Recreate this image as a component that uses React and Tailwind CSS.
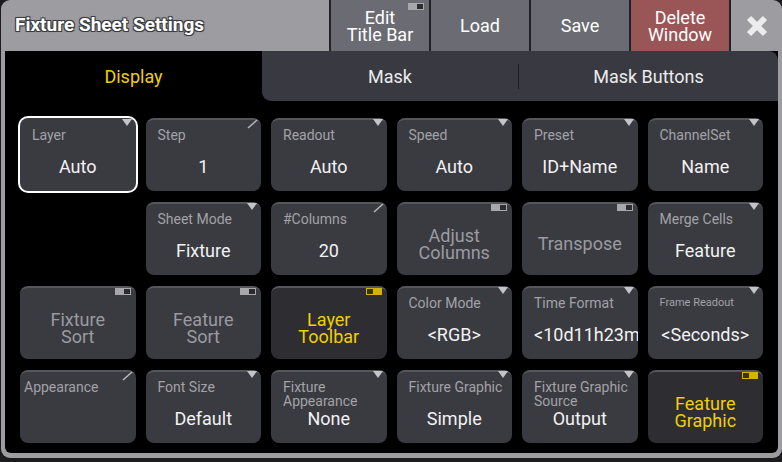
import React from "react";

function Drop() {
  return (
    <svg className="absolute top-[-1px] right-[4px]" width="10" height="7" viewBox="0 0 10 7">
      <path d="M0 0H10L5 7Z" fill="#c4c4c8" />
    </svg>
  );
}

function Edit() {
  return (
    <svg className="absolute top-[-1px] right-[3px]" width="11" height="10" viewBox="0 0 11 10">
      <path d="M1 9L10 1" stroke="#b8b8bc" strokeWidth="1.5" />
    </svg>
  );
}

function Toggle({ on, pos = "top-0 right-[5px]" }) {
  return (
    <div
      className={`absolute ${pos} w-[16px] h-[7px] flex p-[1px] ${
        on ? "bg-[#d4b400] justify-start" : "bg-[#a8a8ac] justify-end"
      }`}
    >
      <div className={`w-[6px] h-full ${on ? "bg-[#3b3300]" : "bg-[#2b2b30]"}`} />
    </div>
  );
}

function Cell({ label, value, ind, labelCls = "pl-[12px] text-[14px]", valueCls = "justify-center", selected, extra = "" }) {
  return (
    <div
      className={`relative rounded-[8px] bg-[#3a3a41] flex flex-col border-t-2 ${
        selected ? "border-[#3a3a41] ring-2 ring-white" : "border-[#56565d]"
      } ${extra}`}
    >
      {ind}
      <div className={`h-[28px] pt-[8px] leading-[14px] text-[#a2a2a7] whitespace-nowrap ${labelCls}`}>{label}</div>
      <div className={`h-[37px] flex items-center text-[18px] text-[#f2f2f2] whitespace-nowrap overflow-hidden ${valueCls}`}>
        {value}
      </div>
    </div>
  );
}

function Big({ lines, on, ind, extra = "" }) {
  return (
    <div
      className={`relative rounded-[8px] border-t-2 border-[#56565d] flex items-center justify-center text-center text-[18px] leading-[17px] pt-[8px] ${
        on ? "bg-[#2d2d32] text-[#f2cf00]" : "bg-[#3a3a41] text-[#9b9ba0]"
      } ${extra}`}
    >
      {ind}
      <div>
        {lines.map((l, i) => (
          <div key={i}>{l}</div>
        ))}
      </div>
    </div>
  );
}

function TitleBtn({ children, bg = "bg-[#6b6c73]", ind }) {
  return (
    <div
      className={`relative w-[100px] border-l-2 border-[#222226] ${bg} flex items-center justify-center text-center text-[18px] leading-[17px] text-white`}
    >
      {ind}
      <div>{children}</div>
    </div>
  );
}

export default function App() {
  return (
    <div className="w-[782px] h-[462px] bg-[#1c1c1e] font-['Roboto',sans-serif] overflow-hidden">
      <div className="ml-[1px] w-[781px] h-[458px] bg-[#9c9ca1] rounded-[9px] flex flex-col overflow-hidden">
        {/* title bar */}
        <div className="h-[51px] flex shrink-0">
          <div className="w-[328px] flex items-center pl-[14px] text-[19px] font-bold text-white [text-shadow:-1px_-1px_0_#3c3c40,1px_-1px_0_#3c3c40,-1px_1px_0_#3c3c40,1px_1px_0_#3c3c40,0_0_2px_#333]">
            Fixture Sheet Settings
          </div>
          <TitleBtn ind={<Toggle pos="top-[3px] right-[5px]" />}>
            Edit
            <br />
            Title Bar
          </TitleBtn>
          <TitleBtn>Load</TitleBtn>
          <TitleBtn>Save</TitleBtn>
          <TitleBtn bg="bg-[#9a5556]">
            Delete
            <br />
            Window
          </TitleBtn>
          <div className="flex-1 border-l-2 border-[#222226] flex items-center justify-center">
            <svg width="24" height="22" viewBox="0 0 24 22">
              <path d="M4 3L20 19M20 3L4 19" stroke="#ececec" strokeWidth="6" />
            </svg>
          </div>
        </div>

        {/* content */}
        <div className="flex-1 mx-[4px] mb-[5px] bg-black rounded-b-[6px] flex flex-col">
          <div className="h-[50px] flex shrink-0 text-[18px]">
            <div className="w-[257px] flex items-center justify-center text-[#f2cf00]">Display</div>
            <div className="flex-1 flex items-center bg-[#393941] rounded-bl-[9px] rounded-tr-[9px] text-[#ececec]">
              <div className="w-[256px] flex justify-center">Mask</div>
              <div className="w-px h-[25px] bg-[#1c1c20]" />
              <div className="flex-1 flex justify-center">Mask Buttons</div>
            </div>
          </div>

          <div className="grid grid-cols-6 grid-rows-[repeat(4,73px)] gap-x-[10px] gap-y-[11px] px-[15px] pt-[17px]">
            {/* row 1 */}
            <Cell label="Layer" value="Auto" ind={<Drop />} selected />
            <Cell label="Step" value="1" ind={<Edit />} />
            <Cell label="Readout" value="Auto" ind={<Drop />} />
            <Cell label="Speed" value="Auto" ind={<Drop />} />
            <Cell label="Preset" value="ID+Name" ind={<Drop />} />
            <Cell label="ChannelSet" value="Name" ind={<Drop />} />

            {/* row 2 */}
            <Cell label="Sheet Mode" value="Fixture" ind={<Drop />} extra="col-start-2" />
            <Cell label="#Columns" value="20" ind={<Edit />} />
            <Big lines={["Adjust", "Columns"]} ind={<Toggle />} />
            <Big lines={["Transpose"]} ind={<Toggle />} />
            <Cell label="Merge Cells" value="Feature" ind={<Drop />} />

            {/* row 3 */}
            <Big lines={["Fixture", "Sort"]} ind={<Toggle />} />
            <Big lines={["Feature", "Sort"]} ind={<Toggle />} />
            <Big lines={["Layer", "Toolbar"]} ind={<Toggle on />} on />
            <Cell label="Color Mode" value="<RGB>" ind={<Drop />} />
            <Cell
              label="Time Format"
              value="<10d11h23m45s>"
              ind={<Drop />}
              valueCls="justify-start pl-[12px]"
            />
            <Cell label="Frame Readout" value="<Seconds>" ind={<Drop />} labelCls="pl-[12px] text-[11px]" />

            {/* row 4 */}
            <Cell label="Appearance" value="" ind={<Edit />} labelCls="pl-[4px] text-[14px]" />
            <Cell label="Font Size" value="Default" ind={<Drop />} />
            <Cell
              label={
                <>
                  Fixture
                  <br />
                  Appearance
                </>
              }
              value="None"
              ind={<Drop />}
            />
            <Cell label="Fixture Graphic" value="Simple" ind={<Drop />} />
            <Cell
              label={
                <>
                  Fixture Graphic
                  <br />
                  Source
                </>
              }
              value="Output"
              ind={<Drop />}
            />
            <Big lines={["Feature", "Graphic"]} ind={<Toggle on />} on />
          </div>
        </div>
      </div>
    </div>
  );
}
